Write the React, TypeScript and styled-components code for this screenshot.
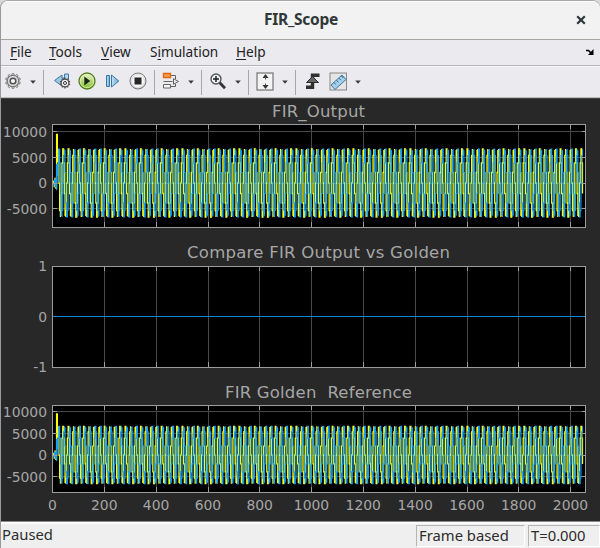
import React from "react";
import styled, { createGlobalStyle } from "styled-components";

const Global = createGlobalStyle`
  * { box-sizing: border-box; }
  body { margin: 0; background: #d9d9db; font-family: "Noto Sans", sans-serif; }
`;

const Window = styled.div`
  width: 600px;
  height: 548px;
  display: flex;
  flex-direction: column;
  overflow: hidden;
  border-left: 1px solid #9a9a9a;
  border-top: 1px solid #a9a8a8;
  border-radius: 8px 8px 0 0;
  background: #ebeaee;
`;
const TitleBar = styled.header`
  height: 38px;
  flex: none;
  display: grid;
  grid-template-columns: 40px 1fr 39px;
  align-items: center;
  background: #f2f2f2;
  color: #30383a;
  text-align: center;
  border-top: 1px solid #fcfcfc;
`;
const Title = styled.h1`
  margin: 0 0 3px;
  font: bold 15.5px/20px "Noto Sans", sans-serif;
  letter-spacing: -0.25px;
`;
const CloseButton = styled.button`
  border: 0;
  padding: 0;
  margin-bottom: 2px;
  background: none;
  height: 10px;
  svg { display: block; margin: auto; }
`;
const MenuBar = styled.nav`
  height: 27px;
  flex: none;
  display: flex;
  align-items: center;
  border-top: 1px solid #a5a69f;
  border-bottom: 1px solid #b4b4b8;
  padding: 0 6px 1px 9px;
`;
const MenuItem = styled.span<{ $w: number }>`
  width: ${(p) => p.$w}px;
  font: 13.6px/20px "Noto Sans", sans-serif;
  color: #222;
  white-space: nowrap;
  u { text-underline-offset: 2px; text-decoration-thickness: 1px; }
`;
const DockIcon = styled.svg`
  margin-left: auto;
`;
const ToolBar = styled.div`
  height: 32px;
  flex: none;
  border-top: 1px solid #f8f8f8;
  border-bottom: 1px solid #b9b9b9;
`;
const Scope = styled.main`
  height: 424px;
  flex: none;
  background: #282828;
  border-top: 1px solid #444;
  border-bottom: 1px solid #8a8a8a;
  display: flex;
  flex-direction: column;
`;
const StatusBar = styled.footer`
  height: 27px;
  flex: none;
  display: flex;
  align-items: center;
  gap: 3px;
  background: #efefef;
  border-top: 2px solid #fbfbfb;
  color: #2c2c2c;
`;
const StatusText = styled.span`
  flex: 1;
  padding: 0 0 5px 1px;
  font: 14.8px/20px "Noto Sans", sans-serif;
`;
const StatusField = styled.span<{ $w: number }>`
  width: ${(p) => p.$w}px;
  height: 22px;
  padding-left: 2px;
  margin-bottom: 2px;
  border: 1px solid #fff;
  border-top-color: #b5b5b5;
  border-left-color: #b5b5b5;
  font: 14.8px/18px "Noto Sans", sans-serif;
  white-space: nowrap;
`;

const X_SCALE = 51.8 / 200;
const LEFT = 52;
const RIGHT = 585;
const AMP = 6640;

function wave(phase: number, transient: number[]) {
  const out: number[] = [...transient];
  for (let n = transient.length; n < 2044; n++) {
    out.push(AMP * Math.sin((2 * Math.PI * (n + phase)) / 20));
  }
  return out;
}
const real = wave(8, [0, 300, -300, 500, -700, 700, -800, 900, -500, 1000, -1000, 1400, 9500, 9500, 6600, 4000]);
const imag = wave(3, [0, -200, 400, -300, 500, -500, 700, -700, 800, -900, 900, -1400, -1400, 3600, 3600, 3600, 1500]);

const GRID = 0.77;
function stairs(data: number[], zero: number, unit: number) {
  let d = "";
  data.forEach((v, n) => {
    const x = (LEFT + 0.5 + Math.round((n * X_SCALE) / GRID) * GRID).toFixed(2);
    const y = (zero - v * unit).toFixed(1);
    d += n === 0 ? `M${x} ${y}` : `H${x}V${y}`;
  });
  return d;
}

interface PlotProps {
  title: string;
  titleX: number;
  titleW: number;
  height: number;
  titleY: number;
  top: number;
  bottom: number;
  zero: number;
  unit: number;
  ticks: number[];
  signal?: boolean;
  axis?: boolean;
}
const PlotText = styled.text<{ $size: number }>`
  font-family: "DejaVu Sans", sans-serif;
  font-size: ${(p) => p.$size}px;
  fill: #a6a6a6;
  white-space: pre;
`;

function Plot(p: PlotProps) {
  const xs = Array.from({ length: 11 }, (_, i) => i * 200);
  const xOf = (v: number) => Math.floor(LEFT - 0.4 + v * X_SCALE) + 0.5;
  const yOf = (v: number) => Math.round(p.zero - v * p.unit - 0.5) + 0.5;
  const step = p.signal;
  return (
    <svg width="599" height={p.height} viewBox={`0 0 599 ${p.height}`}>
      <PlotText $size={16.5} x={p.titleX} y={p.titleY} textLength={p.titleW} xmlSpace="preserve">
        {p.title}
      </PlotText>
      <rect x={LEFT} y={p.top} width={RIGHT - LEFT} height={p.bottom - p.top} fill="#000" />
      <g stroke="#484848" fill="none">
        {xs.slice(1).map((v) => (
          <path key={v} d={`M${xOf(v)} ${p.top}V${p.bottom}`} />
        ))}
        {step && p.ticks.map((v) => <path key={v} d={`M${LEFT} ${yOf(v)}H${RIGHT}`} />)}
      </g>
      {step ? (
        <g fill="none">
          <path stroke="#ffff11" strokeWidth={1.3} d={stairs(real, p.zero, p.unit)} />
          <path stroke="#139fff" strokeWidth={1.08} d={stairs(imag, p.zero, p.unit)} />
        </g>
      ) : (
        <rect x={LEFT} y={p.zero - 0.5} width={RIGHT - LEFT} height={1} fill="#1286d6" />
      )}
      <g stroke="#9c9c9c" fill="none">
        <rect x={LEFT - 0.5} y={p.top - 0.5} width={RIGHT - LEFT} height={p.bottom - p.top + 1} />
        {xs.slice(1).map((v) => (
          <path key={v} d={`M${xOf(v)} ${p.top}v4M${xOf(v)} ${p.bottom}v-5`} />
        ))}
        {step && p.ticks.map((v) => <path key={v} d={`M${LEFT} ${yOf(v)}h4M${RIGHT} ${yOf(v)}h-4`} />)}
      </g>
      {p.ticks.map((v) => (
        <PlotText key={v} $size={13.9} x={46} y={p.zero - v * p.unit + 5.3} textAnchor="end">
          {v}
        </PlotText>
      ))}
      {p.axis &&
        xs.map((v) => (
          <PlotText key={v} $size={13.9} x={LEFT - 0.5 + v * X_SCALE} y={133} textAnchor="middle">
            {v}
          </PlotText>
        ))}
    </svg>
  );
}

const Arrow = ({ x }: { x: number }) => <path d={`M${x - 2.8} 13.5h5.6l-2.8 3.3z`} fill="#3c3c3c" />;
const Divider = ({ x }: { x: number }) => <path d={`M${x + 0.5} 3v25`} stroke="#a7a7a7" />;
const teeth = Array.from({ length: 10 }, (_, i) => i * 36);

function ToolIcons() {
  return (
    <svg width="599" height="30" viewBox="1 0 599 30">
      <defs>
        <linearGradient id="green" x2="0" y2="1">
          <stop stopColor="#edf7cf" />
          <stop offset="1" stopColor="#7fbe28" />
        </linearGradient>
        <linearGradient id="blue" x2="1">
          <stop stopColor="#c7e4f4" />
          <stop offset="1" stopColor="#6aa9d4" />
        </linearGradient>
        <linearGradient id="gray" x2="0" y2="1">
          <stop stopColor="#fff" />
          <stop offset="1" stopColor="#c9c9c9" />
        </linearGradient>
      </defs>
      <g transform="translate(13 14)">
        {teeth.map((a) => (
          <path key={a} d="M-1.3 -5.8L-.8 -7.4H.8L1.3 -5.8" transform={`rotate(${a})`} fill="#ddd" stroke="#6a6a6a" strokeWidth=".8" />
        ))}
        <circle r="5.7" fill="#d9d9d9" stroke="#707070" strokeWidth="1" />
        <circle r="2.8" fill="#f7f7f7" stroke="#505050" strokeWidth="1.5" />
      </g>
      <Arrow x={33} />
      <Divider x={43} />
      <path d="M54.5 13.5L62 8v3h2v5h-2v3z" fill="#9dcbe7" stroke="#3d78a5" />
      <path d="M64.5 7h4v9h-4z" fill="#b6d7ea" stroke="#3d78a5" />
      <g transform="translate(65 16)">
        {teeth.map((a) => (
          <path key={a} d="M0 -3V-5.4" transform={`rotate(${a})`} stroke="#555" strokeWidth="1.3" />
        ))}
        <circle r="3.9" fill="#eee" stroke="#4b4b4b" strokeWidth="1.2" />
        <circle r="1.5" fill="#fff" stroke="#333" />
      </g>
      <circle cx="87" cy="14" r="8" fill="url(#green)" stroke="#547b21" strokeWidth="1.3" />
      <circle cx="87" cy="14" r="6.7" fill="none" stroke="#def0ac" strokeWidth=".8" />
      <path d="M84.3 9.5l6 4.5-6 4.5z" fill="#1c2516" />
      <g fill="url(#blue)" stroke="#3a76a3">
        <path d="M106.5 8.5h3v11h-3z" />
        <path d="M111.5 8l7.3 6-7.3 6z" />
      </g>
      <circle cx="138" cy="14" r="8" fill="url(#gray)" stroke="#777" />
      <circle cx="138" cy="14" r="6.5" fill="#f7f7f7" stroke="#ddd" />
      <rect x="134.5" y="10.5" width="7" height="7" fill="#262626" />
      <Divider x={154} />
      <path d="M163.5 6.5h7v4h-7z" fill="#ff9e50" stroke="#e2640f" strokeWidth="1.3" />
      <path d="M171 8.5h4.5V12M170.5 19.5h5V17" fill="none" stroke="#616161" />
      <path d="M173.5 11.7l5 2.8-5 2.8z" fill="#eee" stroke="#616161" />
      <path d="M163.5 17.5h7v3.5h-7zM163.5 14.5h9" fill="#f5f5f5" stroke="#666" />
      <Arrow x={191} />
      <Divider x={201} />
      <path d="M219.5 15.5l5.5 5.7" stroke="#333" strokeWidth="2.8" />
      <circle cx="216" cy="12" r="5" fill="#edf3f6" stroke="#555" strokeWidth="1.4" />
      <path d="M213 12h6M216 9v6" stroke="#1d1d1d" strokeWidth="1.5" />
      <Arrow x={238} />
      <Divider x={248} />
      <rect x="257" y="6" width="16" height="17" fill="#f4f4f4" stroke="#747474" strokeWidth="1.2" />
      <path d="M265.5 7l3 4h-6zM265.5 22l3-4h-6z" fill="#303030" />
      <path d="M265.5 10v2.5M265.5 16.5v2" stroke="#555" />
      <Arrow x={285} />
      <Divider x={295} />
      <path d="M306 20.3h6.5v-12h7" stroke="#303030" strokeWidth="3.4" fill="none" />
      <path d="M306.5 15.5l6-6 6 6z" fill="#666" stroke="#2b2b2b" />
      <rect x="330" y="6" width="16.5" height="17" fill="#e5e5e3" stroke="#888" />
      <path d="M331 18l11-10 4 4.5-11 10z" fill="#a6d1e9" stroke="#3978a5" />
      <path d="M334 15.5l1.8 2M336.5 13.3l1.8 2M339 11.2l1.8 2M341.5 9l1.8 2" stroke="#27648f" />
      <Arrow x={358} />
    </svg>
  );
}

export default function App() {
  return (
    <>
      <Global />
      <Window>
        <TitleBar>
          <span />
          <Title>FIR_Scope</Title>
          <CloseButton aria-label="Close">
            <svg width="10" height="10" viewBox="0 0 10 10">
              <path d="M1.2 1.2l7.6 7.6M8.8 1.2L1.2 8.8" stroke="#2d3638" strokeWidth="2.2" />
            </svg>
          </CloseButton>
        </TitleBar>
        <MenuBar>
          <MenuItem $w={39}><u>F</u>ile</MenuItem>
          <MenuItem $w={52}><u>T</u>ools</MenuItem>
          <MenuItem $w={49}><u>V</u>iew</MenuItem>
          <MenuItem $w={86}>S<u>i</u>mulation</MenuItem>
          <MenuItem $w={40}><u>H</u>elp</MenuItem>
          <DockIcon width="8" height="7" viewBox="0 0 8 7">
            <path d="M0 1.5h2.5L5 4" fill="none" stroke="#000" strokeWidth="1.7" />
            <path d="M7.5 0v6H2z" fill="#000" />
          </DockIcon>
        </MenuBar>
        <ToolBar>
          <ToolIcons />
        </ToolBar>
        <Scope>
          <Plot title="FIR_Output" titleX={271} titleW={93} titleY={18} height={139} top={26} bottom={128} zero={84} unit={0.00512} ticks={[10000, 5000, 0, -5000]} signal />
          <Plot title="Compare FIR Output vs Golden" titleX={186} titleW={263} titleY={20} height={139} top={29} bottom={129} zero={78.5} unit={50.5} ticks={[1, 0, -1]} />
          <Plot title="FIR Golden  Reference" titleX={224} titleW={187} titleY={21} height={144} top={29} bottom={115} zero={78} unit={0.00432} ticks={[10000, 5000, 0, -5000]} signal axis />
        </Scope>
        <StatusBar>
          <StatusText>Paused</StatusText>
          <StatusField $w={109}>Frame based</StatusField>
          <StatusField $w={72}>T=0.000</StatusField>
        </StatusBar>
      </Window>
    </>
  );
}
